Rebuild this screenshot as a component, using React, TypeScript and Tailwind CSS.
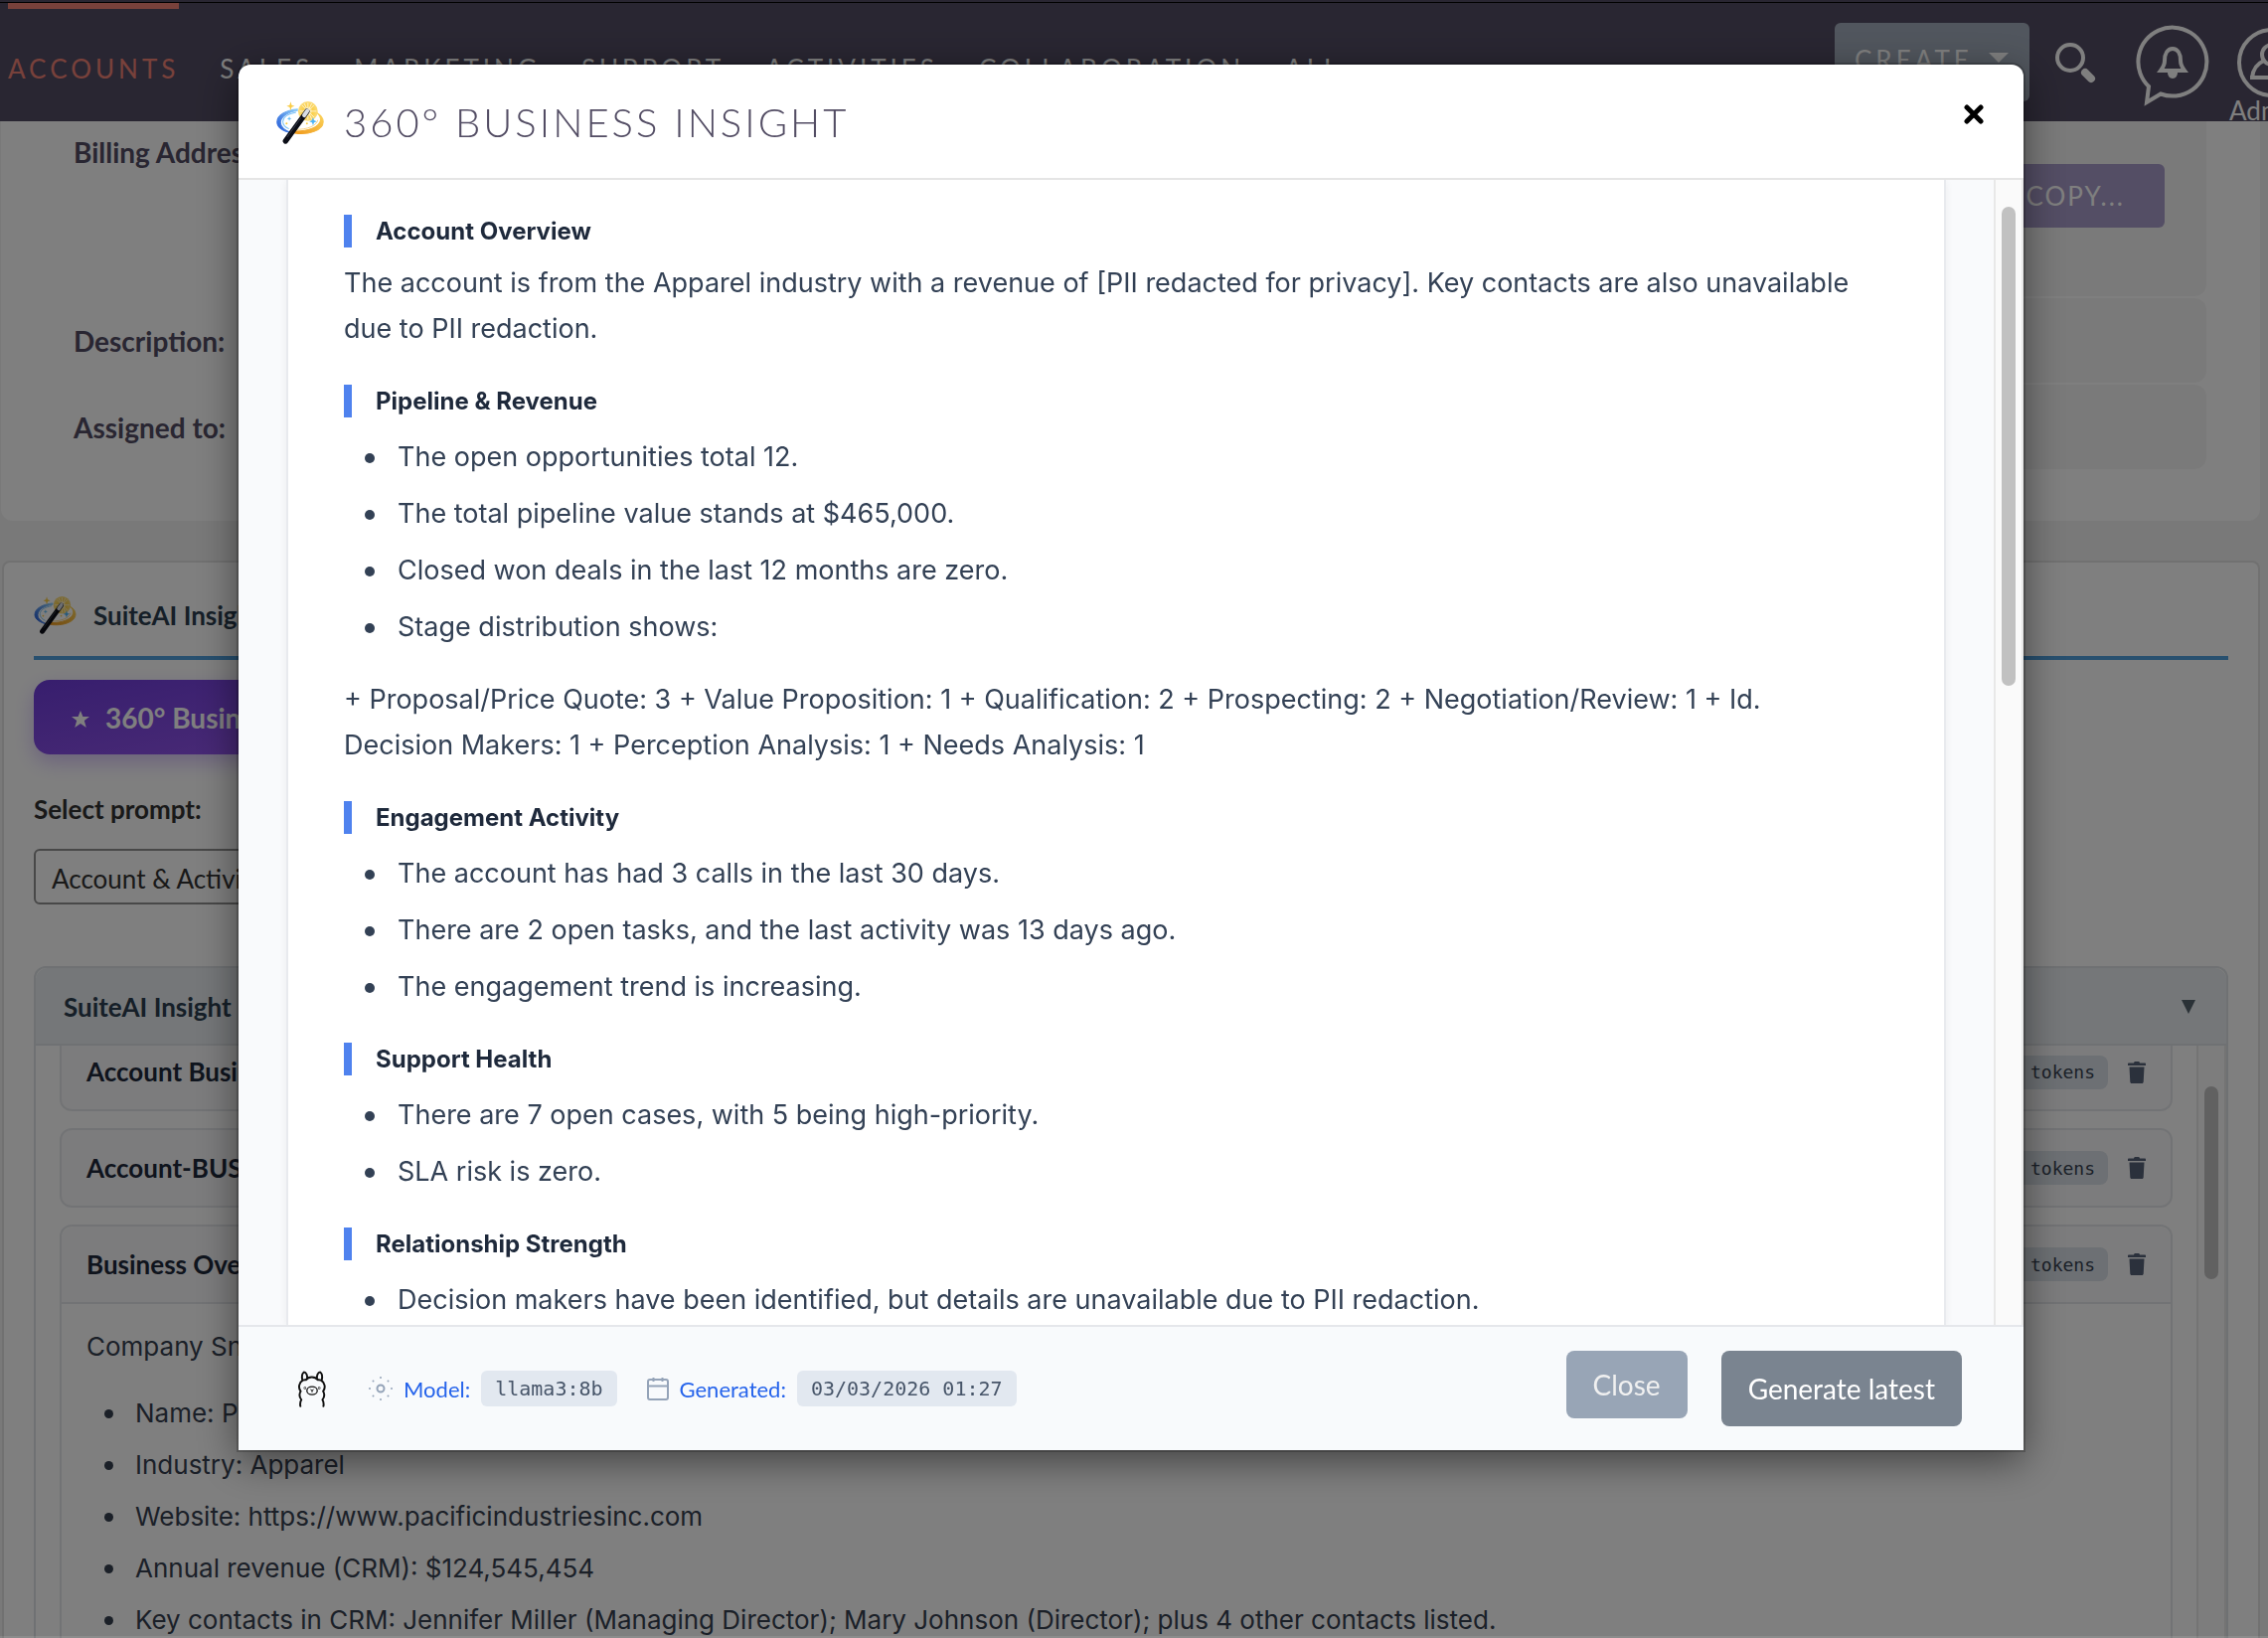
import { useState } from "react";

const navItems = ["Accounts", "Sales", "Marketing", "Support", "Activities", "Collaboration", "All"];

const insights = ["Account Business Overview", "Account-BUSINESS Summary", "Business Overview"];

const company = [
  "Name: Pacific Industries Inc",
  "Industry: Apparel",
  "Website: https://www.pacificindustriesinc.com",
  "Annual revenue (CRM): $124,545,454",
  "Key contacts in CRM: Jennifer Miller (Managing Director); Mary Johnson (Director); plus 4 other contacts listed.",
];

const report = [
  {
    title: "Account Overview",
    intro:
      "The account is from the Apparel industry with a revenue of [PII redacted for privacy]. Key contacts are also unavailable due to PII redaction.",
    items: [],
  },
  {
    title: "Pipeline & Revenue",
    items: [
      "The open opportunities total 12.",
      "The total pipeline value stands at $465,000.",
      "Closed won deals in the last 12 months are zero.",
      "Stage distribution shows:",
    ],
    outro:
      "+ Proposal/Price Quote: 3 + Value Proposition: 1 + Qualification: 2 + Prospecting: 2 + Negotiation/Review: 1 + Id. Decision Makers: 1 + Perception Analysis: 1 + Needs Analysis: 1",
  },
  {
    title: "Engagement Activity",
    items: [
      "The account has had 3 calls in the last 30 days.",
      "There are 2 open tasks, and the last activity was 13 days ago.",
      "The engagement trend is increasing.",
    ],
  },
  {
    title: "Support Health",
    items: ["There are 7 open cases, with 5 being high-priority.", "SLA risk is zero."],
  },
  {
    title: "Relationship Strength",
    items: ["Decision makers have been identified, but details are unavailable due to PII redaction."],
  },
];

function WandIcon({ className }: { className?: string }) {
  return (
    <svg viewBox="26 36 140 126" className={className} fill="none" aria-hidden="true">
      <defs>
        <radialGradient id="burst">
          <stop offset="0" stopColor="#fff8d8" />
          <stop offset="0.5" stopColor="#fbd04a" />
          <stop offset="1" stopColor="#fbdb78" />
        </radialGradient>
        <linearGradient id="swirlBlue" x1="0" y1="1" x2="1" y2="0">
          <stop offset="0" stopColor="#1f55d6" />
          <stop offset="1" stopColor="#8fd0fa" />
        </linearGradient>
        <linearGradient id="swirlGold" x1="0" y1="1" x2="1" y2="0">
          <stop offset="0" stopColor="#f09a1c" />
          <stop offset="1" stopColor="#fbd45c" />
        </linearGradient>
      </defs>
      <circle cx="119" cy="65" r="29" fill="url(#burst)" />
      <path
        d="M119 40v50M94 65h50M101 47l36 36M137 47l-36 36M108 42l22 46M130 42l-22 46"
        stroke="#fff"
        strokeWidth="2"
      />
      <path
        d="M88 59C55 62 28 76 28 97c0 16 18 27 44 33-20-8-34-18-34-32 0-17 22-31 50-35z"
        fill="url(#swirlBlue)"
        stroke="url(#swirlBlue)"
        strokeWidth="3"
      />
      <path d="M84 68c-22 4-38 13-39 27 0 9 7 17 18 22" stroke="#7cc3f7" strokeWidth="3" />
      <path
        d="M80 130c40 6 84-8 84-34 0-11-7-20-18-26 8 7 11 14 10 22-3 20-38 33-76 32z"
        fill="url(#swirlGold)"
        stroke="url(#swirlGold)"
        strokeWidth="3"
      />
      <path d="M84 119c32 0 60-10 64-28" stroke="#f8c04a" strokeWidth="2" />
      <path d="M68 37l3 10 9 3-9 3-3 10-3-10-9-3 9-3z" fill="#f9cc45" />
      <path d="M134 83l3 9 8 3-8 3-3 9-3-9-8-3 8-3z" fill="#4fb4f4" />
      <path d="M64 80l2 5 5 2-5 2-2 5-2-5-5-2 5-2z" fill="#6cc1f7" />
      <circle cx="116" cy="101" r="3" fill="#f9cc45" />
      <circle cx="56" cy="101" r="3" fill="#f9cc45" />
      <path d="M53 153L116 66" stroke="#0b0d16" strokeWidth="16" strokeLinecap="round" />
      <path d="M108 77l9-13" stroke="#d9dde4" strokeWidth="12" strokeLinecap="round" />
      <path d="M58 141l40-56" stroke="#4d5366" strokeWidth="2" />
    </svg>
  );
}

function LlamaIcon() {
  return (
    <svg
      viewBox="56 84 92 112"
      className="h-[37px] w-[30px]"
      fill="none"
      stroke="#111"
      strokeWidth="6"
      strokeLinecap="round"
      strokeLinejoin="round"
      aria-hidden="true"
    >
      <path d="M66 193c-2-10 0-15 3-20-7-9-7-18-2-26-9-11-5-28 7-34 3-1 6-2 9-1 8-12 28-12 37 0 3-1 6 0 9 1 12 6 16 23 7 34 5 8 5 17-2 26 3 5 5 10 3 20" />
      <path d="M72 112c-2-10-1-20 5-24 7 0 11 10 10 20M132 112c2-10 1-20-5-24-7 0-11 10-10 20" />
      <ellipse cx="102" cy="145" rx="16" ry="12" strokeWidth="4" />
      <path d="M98 142l4 3 4-3M102 145v4" strokeWidth="3" />
      <circle cx="80" cy="137" r="1" />
      <circle cx="124" cy="137" r="1" />
    </svg>
  );
}

function SunIcon() {
  return (
    <svg viewBox="0 0 24 24" className="size-6" fill="#94a3b8" aria-hidden="true">
      <circle cx="12" cy="12" r="3.5" fill="none" stroke="#94a3b8" strokeWidth="2" />
      <circle cx="12" cy="1" r="1" />
      <circle cx="12" cy="23" r="1" />
      <circle cx="1" cy="12" r="1" />
      <circle cx="23" cy="12" r="1" />
      <circle cx="4.5" cy="4.5" r="1" />
      <circle cx="19.5" cy="4.5" r="1" />
      <circle cx="4.5" cy="19.5" r="1" />
      <circle cx="19.5" cy="19.5" r="1" />
    </svg>
  );
}

function CalendarIcon() {
  return (
    <svg viewBox="0 0 22 24" className="h-6 w-[22px]" fill="none" stroke="#94a3b8" strokeWidth="2" aria-hidden="true">
      <rect x="1" y="3" width="20" height="20" rx="2" />
      <path d="M1 9.500h20M6.500 1v4M15.500 1v4" />
    </svg>
  );
}

function TrashIcon() {
  return (
    <svg viewBox="0 0 18 22" className="h-[22px] w-[18px]" fill="#566279" aria-hidden="true">
      <path d="M6 1.500C6 .6 6.700 0 7.500 0h3c.8 0 1.500.6 1.500 1.500h5c.6 0 1 .4 1 1V4H0V2.500c0-.6.400-1 1-1z" />
      <path d="M1.500 5.500h15l-.8 15c0 .9-.7 1.500-1.500 1.500H3.800c-.8 0-1.500-.6-1.500-1.500z" />
    </svg>
  );
}

function Nav() {
  return (
    <header className="shrink-0 overflow-hidden bg-[#534d64] font-[Lato,sans-serif] text-[26px] text-white">
      <div className="h-[3px] border-b border-black" />
      <div className="flex h-[119px] justify-between">
        <nav className="flex gap-[41px] pl-2">
          {navItems.map((item, i) => (
            <a
              key={item}
              href="#"
              className={
                i === 0
                  ? "flex items-center border-t-[6px] border-[#f08377] pt-2 tracking-[4px] text-[#f08377] uppercase"
                  : "flex items-center pt-[14px] tracking-[4px] uppercase"
              }
            >
              {item}
            </a>
          ))}
        </nav>
        <div className="-mr-[47px] flex shrink-0 items-start pt-5">
          <button className="flex h-[79px] w-[196px] items-start gap-4 rounded-md bg-[#a3adbc] pt-[18px] pl-5 tracking-[4px] uppercase">
            Create
            <svg viewBox="0 0 20 10" className="mt-3 h-[10px] w-5 fill-white" aria-hidden="true">
              <path d="M0 0h20L10 10z" />
            </svg>
          </button>
          <button aria-label="Search" className="mt-5 ml-[25px]">
            <svg viewBox="0 0 42 42" className="size-[42px]" fill="none" stroke="#fff" aria-hidden="true">
              <circle cx="16" cy="15" r="13" strokeWidth="4" />
              <path d="M31 30l6 6" strokeWidth="8" strokeLinecap="round" />
            </svg>
          </button>
          <button aria-label="Notifications" className="mt-[2px] ml-10">
            <svg viewBox="0 0 74 84" className="h-[84px] w-[74px]" fill="none" stroke="#fff" strokeWidth="4" aria-hidden="true">
              <path d="M13 62A34.500 34.500 0 1 1 25 69.500L11 78z" />
              <path d="M25 46h24c-3-4-4-6-4-10 0-7-3-12-8-12s-8 5-8 12c0 4-1 6-4 10z" />
              <path d="M32 48h10c0 3-2 6-5 6s-5-3-5-6z" fill="#fff" stroke="none" />
            </svg>
          </button>
          <div className="mt-[5px] ml-[20px] flex w-[86px] flex-col">
            <svg viewBox="0 0 70 70" className="ml-2 size-[70px]" fill="none" stroke="#fff" strokeWidth="4" aria-hidden="true">
              <circle cx="35" cy="35" r="33" />
              <circle cx="35" cy="27" r="10" />
              <path d="M15 50c1-9 5-14 12-17M55 50c-1-9-5-14-12-17M13 50h44" />
            </svg>
            <span className="leading-[26px]">Admin</span>
          </div>
        </div>
      </div>
    </header>
  );
}

function DetailPanel() {
  return (
    <section className="mr-2 ml-px flex flex-col gap-[2px] rounded-b-xl bg-white pr-[54px] pb-[52px] pl-[73px] font-[Lato,sans-serif] text-[28px] font-bold text-[#534d64]">
      <div className="flex h-44">
        <div className="w-[210px] pt-[13px] leading-9">Billing Address:</div>
        <div className="flex flex-1 justify-end rounded-b-xl bg-[#f5f5f5] pt-[43px] pr-[42px]">
          <button className="h-16 rounded-md bg-[#a89cca] pr-[40px] pl-10 text-[26px] font-normal tracking-[2px] text-white">
            COPY...
          </button>
        </div>
      </div>
      <div className="flex h-[85px] items-center">
        <div className="w-[210px]">Description:</div>
        <div className="h-full flex-1 rounded-xl bg-[#f5f5f5]" />
      </div>
      <div className="flex h-[85px] items-center">
        <div className="w-[210px]">Assigned to:</div>
        <div className="h-full flex-1 rounded-xl bg-[#f5f5f5]" />
      </div>
    </section>
  );
}

function InsightRow({ name }: { name: string }) {
  return (
    <div className="flex items-center pr-[25px] pl-[25px]">
      <span className="flex-1 text-[26px] font-bold text-[#1e293b]">{name}</span>
      <span className="flex h-[34px] items-center rounded-lg bg-[#dae1e8] px-[13px] font-['DejaVu_Sans_Mono',monospace] text-[18px] text-[#374151]">
        1204 tokens
      </span>
      <button aria-label={"Delete " + name} className="ml-5">
        <TrashIcon />
      </button>
    </div>
  );
}

function InsightPanel() {
  return (
    <section className="mt-10 mr-2 ml-[2px] flex-1 rounded-t-lg border-2 border-b-0 border-[#e2e2e2] bg-white px-[30px] font-[Lato,sans-serif] text-[26px] text-[#333]">
      <div className="flex h-[98px] items-center gap-[17px] border-b-4 border-[#50a0de] pt-3">
        <WandIcon className="h-[38px] w-[43px]" />
        <h2 className="font-bold text-[#2c3e50]">SuiteAI Insights</h2>
      </div>
      <button className="mt-5 flex h-[75px] items-center gap-4 rounded-2xl bg-linear-to-br from-[#6f3cdc] to-[#9b59f0] px-[38px] text-[28px] font-bold text-white shadow-[0_8px_20px_rgba(124,58,237,0.3)]">
        <svg viewBox="0 0 18 17" className="mt-1 h-[17px] w-[18px] fill-white" aria-hidden="true">
          <path d="M9 0l2.400 6H18l-5.200 4 2 7L9 13l-5.800 4 2-7L0 6h6.600z" />
        </svg>
        360° Business Insight
      </button>
      <label htmlFor="prompt" className="mt-[39px] block leading-8 font-bold">
        Select prompt:
      </label>
      <select
        id="prompt"
        className="mt-6 block h-14 w-[600px] appearance-none rounded-md border-2 border-[#909090] bg-white px-4 pt-1"
      >
        <option>Account &amp; Activity Summary</option>
      </select>
      <div className="mt-[62px] rounded-t-xl border-2 border-b-0 border-[#dee2e6]">
        <button className="flex h-[78px] w-full items-center justify-between rounded-t-xl border-b-2 border-[#dee2e6] bg-[#eaeef2] pt-[2px] pr-[31px] pl-7 font-bold text-[#2c3e50]">
          SuiteAI Insight History
          <svg viewBox="0 0 14 14" className="size-[14px] fill-[#56646f]" aria-hidden="true">
            <path d="M0 0h14L7 14z" />
          </svg>
        </button>
        <div className="flex">
          <div className="flex flex-1 flex-col gap-[17px] px-6">
            <div className="rounded-b-xl border-2 border-t-0 border-[#e5e7eb] bg-[#f9f9fa] pt-[7px] pb-[18px]">
              <InsightRow name={insights[0]} />
            </div>
            <div className="flex h-20 flex-col justify-center rounded-xl border-2 border-[#e5e7eb] bg-[#f9f9fa]">
              <InsightRow name={insights[1]} />
            </div>
            <div className="rounded-t-xl border-2 border-b-0 border-[#e5e7eb]">
              <div className="flex h-[78px] flex-col justify-center rounded-t-xl border-b-2 border-[#e5e7eb] bg-[#f9f9fa]">
                <InsightRow name={insights[2]} />
              </div>
              <div className="px-[25px] pt-[22px] font-[Inter,sans-serif] text-[26px] leading-[42px] text-[#374151]">
                <p>Company Snapshot</p>
                <ul className="mt-[25px] flex flex-col gap-[10px] pl-[18px]">
                  {company.map((line) => (
                    <li
                      key={line}
                      className="flex gap-[22px] before:mt-[17px] before:size-[9px] before:shrink-0 before:rounded-full before:bg-[#374151]"
                    >
                      {line}
                    </li>
                  ))}
                </ul>
              </div>
            </div>
          </div>
          <div className="w-[30px] border-x-2 border-[#e8e8e8] bg-[#fafafa] px-[6px] pt-[41px]">
            <div className="h-[194px] rounded-full bg-[#c2c2c2]" />
          </div>
        </div>
      </div>
    </section>
  );
}

function Report() {
  return (
    <article className="min-w-0 flex-1 border-x-2 border-[#e8eaee] bg-white pt-[35px] pr-20 pl-14 font-[Inter,sans-serif] text-[27px] leading-[46px] text-[#334155] shadow-[0_2px_8px_rgba(0,0,0,0.06)]">
      {report.map((section) => (
        <section key={section.title} className="mb-[33px]">
          <h3 className="border-l-8 border-[#4f82ee] pl-6 text-[24px] leading-[33px] font-bold text-[#1e293b]">
            {section.title}
          </h3>
          {section.intro && <p className="mt-[13px]">{section.intro}</p>}
          {section.items.length > 0 && (
            <ul className="mt-[17px] flex flex-col gap-[11px] pl-[21px]">
              {section.items.map((item) => (
                <li
                  key={item}
                  className="flex gap-[23px] before:mt-[19px] before:size-[10px] before:shrink-0 before:rounded-full before:bg-[#334155]"
                >
                  {item}
                </li>
              ))}
            </ul>
          )}
          {section.outro && <p className="mt-[27px]">{section.outro}</p>}
        </section>
      ))}
    </article>
  );
}

function InsightDialog({ onClose }: { onClose: () => void }) {
  return (
    <div className="fixed inset-0 flex flex-col border-b-2 border-white/10 bg-black/50 pt-[65px] pr-[246px] pb-[187px] pl-[240px] font-[Lato,sans-serif]">
      <div
        role="dialog"
        aria-labelledby="dialog-title"
        className="flex min-h-0 flex-1 flex-col rounded-t-xl bg-white shadow-[0_0_0_2px_rgba(0,0,0,0.2),0_10px_40px_rgba(0,0,0,0.5)]"
      >
        <div className="flex h-[116px] shrink-0 items-center gap-5 border-b-2 border-[#e5e5e5] pt-[2px] pr-[40px] pl-[38px]">
          <WandIcon className="h-[43px] w-[48px]" />
          <h1 id="dialog-title" className="flex-1 text-[40px] font-light tracking-[3px] text-[#534d64] uppercase">
            360° Business Insight
          </h1>
          <button aria-label="Close dialog" onClick={onClose} className="mb-4">
            <svg viewBox="0 0 20 20" className="size-5" stroke="#000" strokeWidth="5" strokeLinecap="round" aria-hidden="true">
              <path d="M3 3l14 14M17 3L3 17" />
            </svg>
          </button>
        </div>
        <div className="flex min-h-0 flex-1 overflow-hidden bg-[#f9fafc]">
          <div className="flex min-w-0 flex-1 pr-12 pl-12">
            <Report />
          </div>
          <div className="w-[30px] border-x-2 border-[#e8e8e8] bg-[#fafafa] px-[6px] pt-[27px]">
            <div className="h-[482px] rounded-full bg-[#c1c1c1]" />
          </div>
        </div>
        <div className="flex h-[126px] shrink-0 items-start justify-between border-t-2 border-[#e5e7eb] bg-[#f8fafc] pr-[62px] pl-[59px]">
          <div className="flex h-full items-center text-[22px] text-[#2563eb]">
            <LlamaIcon />
            <span className="ml-[42px] flex items-center gap-[11px]">
              <SunIcon />
              Model:
              <code className="rounded-md bg-[#e2e8f0] px-[14px] font-['DejaVu_Sans_Mono',monospace] text-[20px] leading-9 text-[#475569]">
                llama3:8b
              </code>
            </span>
            <span className="ml-[30px] flex items-center gap-[11px]">
              <CalendarIcon />
              Generated:
              <code className="rounded-md bg-[#e2e8f0] px-[14px] font-['DejaVu_Sans_Mono',monospace] text-[20px] leading-9 text-[#475569]">
                03/03/2026 01:27
              </code>
            </span>
          </div>
          <div className="flex items-start gap-[34px] pt-6 text-[28px]">
            <button onClick={onClose} className="h-[68px] rounded-lg bg-[#98a5b6] px-[27px] text-[#f0f0f0]">
              Close
            </button>
            <button className="h-[76px] rounded-lg bg-[#7a8490] px-[27px] text-white">Generate latest</button>
          </div>
        </div>
      </div>
    </div>
  );
}

export default function App() {
  const [open, setOpen] = useState(true);

  return (
    <div className="flex h-screen flex-col overflow-hidden bg-[#f3f3f3]">
      <Nav />
      <main className="flex min-h-0 flex-1 flex-col overflow-hidden">
        <DetailPanel />
        <InsightPanel />
      </main>
      {open && <InsightDialog onClose={() => setOpen(false)} />}
    </div>
  );
}
